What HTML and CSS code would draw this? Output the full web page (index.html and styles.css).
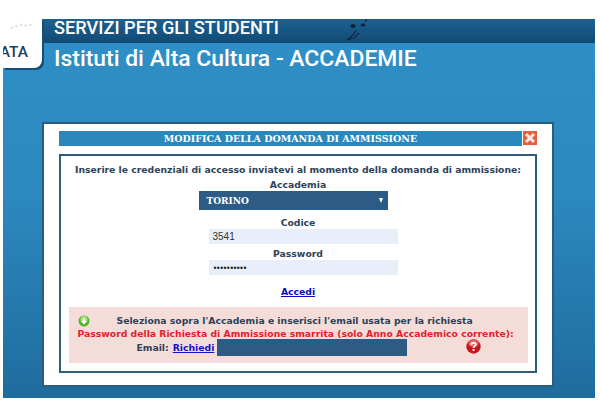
FILE: index.html
```html
<!DOCTYPE html>
<html lang="it">
<head>
    <meta charset="UTF-8">
    <title>Modifica della domanda di ammissione</title>
    <link rel="stylesheet" href="styles.css">
</head>
<body>
    <div class="sito">
        <div class="logo">
            <svg class="logo-segno" width="32" height="12" viewBox="0 0 32 12"><path d="M6 8c3-4 5-2 8-3s4-3 6-1 4-1 8 0" fill="none" stroke="#e4e4e4" stroke-width="2" stroke-dasharray="3 2"/></svg>
            <span class="logo-testo">DATA</span>
        </div>
        <header class="testata">
            <h2>SERVIZI PER GLI STUDENTI</h2>
            <svg class="firma" width="24" height="24" viewBox="0 0 24 24"><path d="M2 21C6 18 10 15 11 11M2 21l7-2 5-5M20 3l2-3" fill="none" stroke="#102c44" stroke-width="1.3"/><ellipse cx="8" cy="7" rx="2.6" ry="1.9" fill="#0d2438"/><ellipse cx="18" cy="6" rx="2.4" ry="1.5" fill="#0d2438"/></svg>
        </header>
        <h1 class="titolo">Istituti di Alta Cultura - ACCADEMIE</h1>

        <div class="finestra">
            <div class="barra">
                <div class="barra-titolo">MODIFICA DELLA DOMANDA DI AMMISSIONE</div>
                <div class="chiudi">
                    <svg width="14" height="14" viewBox="0 0 14 14"><path d="M3 3l8 8M11 3l-8 8" stroke="#fbe8de" stroke-width="3"/></svg>
                </div>
            </div>
            <div class="riquadro">
                <p class="intro">Inserire le credenziali di accesso inviatevi al momento della domanda di ammissione:</p>
                <label class="accademia">Accademia</label>
                <div class="select">
                    <span>TORINO</span>
                    <span class="freccia"></span>
                </div>
                <label class="codice">Codice</label>
                <div class="campo">3541</div>
                <label class="password">Password</label>
                <div class="campo punti">••••••••••</div>
                <a class="accedi" href="#">Accedi</a>
                <section class="smarrita">
                    <div class="riga-info">
                        <svg class="ico-verde" width="12" height="12" viewBox="0 0 12 12"><circle cx="6" cy="6" r="5.5" fill="#55b52e"/><circle cx="6" cy="4.5" r="3.5" fill="#9be27a"/><path d="M6 3v5M3.8 6L6 8.4 8.2 6" fill="none" stroke="#fff" stroke-width="1.6"/></svg>
                        <span>Seleziona sopra l'Accademia e inserisci l'email usata per la richiesta</span>
                    </div>
                    <p class="avviso">Password della Richiesta di Ammissione smarrita (solo Anno Accademico corrente):</p>
                    <div class="riga-email">
                        <strong>Email:</strong>
                        <a href="#">Richiedi</a>
                        <div class="email"></div>
                        <svg class="ico-rosso" width="15" height="15" viewBox="0 0 15 15"><circle cx="7.5" cy="7.5" r="7.2" fill="#c8161f"/><ellipse cx="7.5" cy="4.5" rx="5" ry="3.4" fill="#ec6a6a"/><path d="M5.3 5.6C5.5 3.2 9.8 3.2 9.8 5.6 9.8 7.3 7.5 7.2 7.5 9" fill="none" stroke="#fff" stroke-width="1.7"/><rect x="6.6" y="10" width="1.9" height="1.9" fill="#fff"/></svg>
                    </div>
                </section>
            </div>
        </div>
    </div>
</body>
</html>
```

FILE: styles.css
```css
body{
    margin: 0;
    background: #fff;
    font-family: "DejaVu Sans", Verdana, sans-serif;
    font-size: 9.25px;
    color: #2c4258;
}
.sito{
    position: relative;
    margin: 19px 0 0 3px;
    width: 592px;
    height: 379px;
    padding-top: 24px;
    box-sizing: border-box;
    background: linear-gradient(#2f8fc6, #2d89c0 45%, #1f6c9e);
}
.testata{
    position: absolute;
    top: 0;
    left: 0;
    width: 100%;
    height: 24px;
    background: linear-gradient(#1d618f, #114a75);
}
.testata h2{
    margin: 0 0 0 51px;
    font-family: Roboto, sans-serif;
    font-size: 18.2px;
    font-weight: 500;
    line-height: 18px;
    color: #fff;
}
.firma{
    position: absolute;
    left: 342px;
    top: 0;
}
.logo{
    position: absolute;
    z-index: 2;
    left: 0;
    top: 0;
    width: 39px;
    height: 49px;
    background: #fff;
    border-bottom-right-radius: 8px;
    box-shadow: 2px 2px 0 #174e78;
    overflow: hidden;
}
.logo-segno{
    position: absolute;
    left: 2px;
    top: 2px;
}
.logo-testo{
    position: absolute;
    right: 14px;
    top: 24px;
    font-family: Roboto, sans-serif;
    font-size: 15.5px;
    font-weight: 500;
    color: #23405c;
}
.titolo{
    margin: 0 0 50px 51px;
    padding-top: 2px;
    font-family: Roboto, sans-serif;
    font-size: 22.9px;
    font-weight: 500;
    line-height: 27px;
    color: #fff;
}
.finestra{
    width: 512px;
    height: 265px;
    margin-left: 39px;
    padding: 7px 15px 0;
    box-sizing: border-box;
    background: #fff;
    border: 2px solid #2b5b80;
}
.barra{
    display: flex;
    gap: 1px;
    height: 15px;
    margin-bottom: 8px;
}
.barra-titolo{
    flex: 1;
    background: #2b88bd;
    color: #fff;
    font-family: "DejaVu Serif", serif;
    font-size: 9.5px;
    font-weight: bold;
    line-height: 15px;
    text-align: center;
}
.chiudi{
    width: 14px;
    height: 14px;
    background: #e2603f;
}
.riquadro{
    display: flex;
    flex-direction: column;
    align-items: center;
    height: 219px;
    padding-top: 7px;
    box-sizing: border-box;
    border: 2px solid #2f5f78;
    border-top-color: #2b5b80;
    border-right-color: #2b5b80;
}
.intro{
    margin: 0;
    font-weight: bold;
    line-height: 13px;
    white-space: nowrap;
}
label{
    font-weight: bold;
    line-height: 12px;
}
.accademia{
    margin-top: 3px;
}
.select{
    display: flex;
    justify-content: space-between;
    align-items: center;
    width: 189px;
    height: 19px;
    margin-right: 10px;
    padding: 0 5px 0 8px;
    box-sizing: border-box;
    background: #2c5c85;
    color: #fff;
    font-family: "DejaVu Serif", serif;
    font-size: 9px;
    font-weight: bold;
}
.freccia{
    width: 0;
    height: 0;
    border-left: 2.5px solid transparent;
    border-right: 2.5px solid transparent;
    border-top: 5px solid #fff;
}
.codice{
    margin-top: 7px;
}
.password{
    margin-top: 4px;
}
.campo{
    width: 189px;
    height: 15px;
    margin-left: 10px;
    padding-left: 4px;
    box-sizing: border-box;
    background: #e8effa;
    font-family: "Liberation Sans", Arial, sans-serif;
    font-size: 10px;
    line-height: 16px;
    color: #333;
}
.punti{
    padding-left: 5px;
    font-size: 8.5px;
    letter-spacing: 0.35px;
    color: #222;
}
.accedi{
    margin-top: 10px;
    font-weight: bold;
    line-height: 13px;
    color: #0a0ab8;
}
.smarrita{
    width: 459px;
    height: 56px;
    margin-top: 9px;
    padding-top: 7px;
    box-sizing: border-box;
    background: #f4dcd9;
    font-weight: bold;
}
.riga-info{
    position: relative;
    height: 13px;
    line-height: 13px;
    padding-left: 48px;
}
.ico-verde{
    position: absolute;
    left: 9px;
    top: 1px;
}
.avviso{
    margin: 0;
    color: #e4202c;
    line-height: 13px;
    padding-left: 9px;
    white-space: nowrap;
}
.riga-email{
    display: flex;
    align-items: center;
    height: 17px;
    margin-top: -1px;
    padding-left: 68px;
}
.riga-email a{
    margin-left: 4px;
    color: #1212c8;
}
.email{
    width: 190px;
    height: 17px;
    margin-left: 3px;
    background: #2c5c85;
}
.ico-rosso{
    align-self: flex-start;
    margin-left: 59px;
}
```
